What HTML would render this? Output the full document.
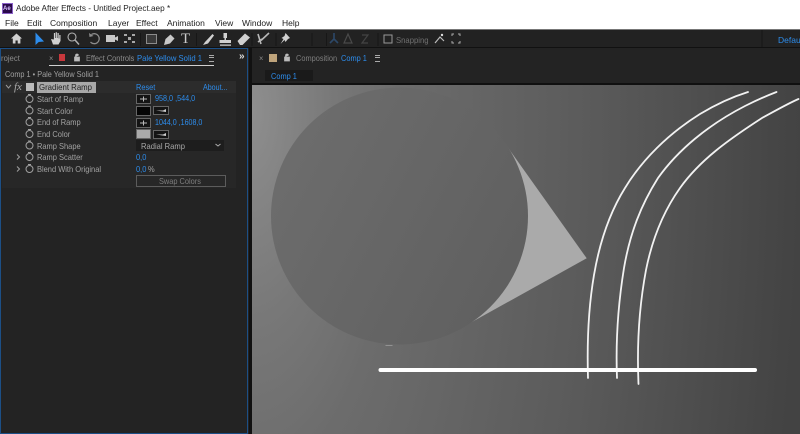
<!DOCTYPE html>
<html><head><meta charset="utf-8">
<style>
html,body{margin:0;padding:0;width:800px;height:434px;overflow:hidden;background:#232323}
body{position:relative;font-family:"Liberation Sans",sans-serif}
.t{position:absolute;white-space:nowrap;line-height:12px;font-size:8.5px;color:#a2a2a2;transform-origin:0 50%;transform:scaleX(.88)}
.m{color:#222;transform:none}
.b{color:#2d8ceb}
.d{position:absolute}
</style></head><body>
<div class="d" style="left:0;top:0;width:800px;height:29px;background:#fff"></div>
<div class="d" style="left:2px;top:3px;width:9px;height:9px;background:#2a0a4a;border:1px solid #8a60c8"></div>
<div class="t" style="left:3px;top:3px;font-size:6px;color:#d8c0ff;font-weight:bold;transform:none">Ae</div>
<div class="t m" style="left:16px;top:3px;font-size:8.2px">Adobe After Effects - Untitled Project.aep *</div>
<div class="t m" style="left:5px;top:17px">File</div>
<div class="t m" style="left:27px;top:17px">Edit</div>
<div class="t m" style="left:50px;top:17px">Composition</div>
<div class="t m" style="left:108px;top:17px">Layer</div>
<div class="t m" style="left:136px;top:17px">Effect</div>
<div class="t m" style="left:167px;top:17px">Animation</div>
<div class="t m" style="left:215px;top:17px">View</div>
<div class="t m" style="left:242px;top:17px">Window</div>
<div class="t m" style="left:282px;top:17px">Help</div>
<div class="d" style="left:0;top:29px;width:800px;height:1px;background:#777"></div>
<div class="d" style="left:0;top:30px;width:800px;height:17px;background:#222"></div>
<div class="d" style="left:0;top:47px;width:800px;height:1px;background:#111"></div>

<svg class="d" style="left:0;top:28px" width="800" height="22" viewBox="0 28 800 22">
<path d="M16.500 33.500l-5.500 5h1.800v5h2.700v-3h2.200v3h2.700v-5h1.600z" fill="#d0d0d0"/>
<path d="M35.500 32.500v12.500l3.200-3 5.300-.5z" fill="#2d8ceb"/>
<path d="M51 39l2 5.500h5.500l2-3.500v-6h-1.200v3.500h-.6v-5.500h-1.200v5h-.6v-5.800h-1.200v5.800h-.6v-5h-1.200v6.500z" fill="#d0d0d0"/>
<circle cx="72" cy="37" r="4" fill="none" stroke="#b0b0b0" stroke-width="1.100"/><path d="M75 40l4 4.500" stroke="#b0b0b0" stroke-width="1.500"/>
<path d="M91.500 34.500a5 5 0 1 1 -1 7.500" fill="none" stroke="#8c8c8c" stroke-width="1.300"/><path d="M89 33l.5 4 4-1z" fill="#8c8c8c"/>
<path d="M106 35h9v7h-9zM115 37.500l3-1.500v5l-3-1.500z" fill="#c8c8c8"/>
<g fill="#a8a8a8"><rect x="124" y="34" width="3" height="2"/><rect x="132" y="34" width="3" height="2"/><rect x="124" y="41" width="3" height="2"/><rect x="132" y="41" width="3" height="2"/><rect x="128" y="37" width="3" height="3"/></g>
<rect x="146.500" y="34.500" width="10" height="9" fill="#3a3a3a" stroke="#8c8c8c" stroke-width="1"/>
<path d="M164 45l1.500-6 5-4.500 4 4-4.500 5z" fill="#c8c8c8"/>
<path d="M203 45l2-3 7.500-8 1.500 1.500-6 8z" fill="#d0d0d0"/>
<path d="M223.500 33h3.500v5h-1v2h5v3h-11.500v-3h5v-2h-1zM220 44.500h11v1.200h-11z" fill="#d0d0d0"/>
<path d="M237.500 41l7.500-7.500 5 4-7.500 7.500h-2.500z" fill="#d0d0d0"/>
<path d="M258 34l3 10M261 40.500l8-7.500M258 42l4-3" stroke="#b8b8b8" stroke-width="1.600" fill="none"/>
<path d="M285.500 33l4.500 5-2 1-2.500 3-1-2-4 4 3-5-2-1 3-2z" fill="#d0d0d0"/>
<g fill="none" stroke-width="1.200"><path d="M334 33v6l-4 4M334 39l4 4" stroke="#2c4868" stroke-width="1.600"/><path d="M348 34l-4 9h8z" stroke="#4a4a4a"/><path d="M362 35h6l-6 8h6" stroke="#444"/></g>
<rect x="384" y="35" width="8" height="8" fill="none" stroke="#999" stroke-width="1"/>
<path d="M435 43l5-6 4 4" fill="none" stroke="#bbb" stroke-width="1.200"/><circle cx="442" cy="35" r="1.200" fill="#ddd"/>
<g fill="none" stroke="#aaa" stroke-width="1"><path d="M452 36v-2h2M458 34h2v2M460 41v2h-2M454 43h-2v-2"/></g>
<path d="M140.500 33v13M196.500 33v13M252 33v13M276 33v13M312 33v13M326.500 33v13M378 33v13M762 30v17" stroke="#171717" stroke-width="1"/>
</svg>
<div class="t" style="left:181px;top:32px;font-family:'Liberation Serif',serif;font-size:15px;color:#ccc;line-height:15px;transform:none">T</div>
<div class="t" style="left:396px;top:34px;color:#707070;transform:scaleX(.906)">Snapping</div>
<div class="t b" style="left:778px;top:34px;transform:none">Default</div>

<!-- left panel -->
<div class="d" style="left:0;top:48px;width:248px;height:386px;background:#232323;box-sizing:border-box;border:1px solid #1c4f86"></div>
<div class="d" style="left:249px;top:48px;width:3px;height:386px;background:#111"></div>
<div class="d" style="left:252px;top:48px;width:548px;height:37px;background:#232323"></div>
<div class="t" style="left:1px;top:52px;color:#8c8c8c;transform:scaleX(.906)">roject</div>
<div class="t" style="left:49px;top:52px;color:#8a8a8a">×</div>
<div class="d" style="left:59px;top:54px;width:6px;height:7px;background:#c8383c"></div>
<svg class="d" style="left:73px;top:53px" width="8" height="9"><path d="M1.500 4h5v4h-5zM2.500 4v-1.500a1.500 1.500 0 0 1 3 0" fill="#bbb" stroke="#bbb" stroke-width=".7"/></svg>
<div class="t" style="left:85.500px;top:52px;color:#8c8c8c;transform:scaleX(.87)">Effect Controls</div>
<div class="t b" style="left:137px;top:52px;transform:scaleX(.906)">Pale Yellow Solid 1</div>
<div class="d" style="left:209px;top:55px;width:5px;height:5px;border-top:1px solid #aaa;border-bottom:1px solid #aaa"></div><div class="d" style="left:209px;top:57px;width:5px;height:1px;background:#aaa"></div>
<div class="d" style="left:49px;top:65px;width:165px;height:1px;background:#d0d0d0"></div>
<div class="t" style="left:239px;top:51px;color:#ddd;font-weight:bold;font-size:10px;transform:none">»</div>
<div class="t" style="left:5px;top:68px;color:#a0a0a0;transform:scaleX(.86)">Comp 1 • Pale Yellow Solid 1</div>

<div class="d" style="left:2px;top:81px;width:234px;height:12px;background:#2c2c2c"></div>
<div class="d" style="left:2px;top:93px;width:234px;height:95px;background:#272727"></div>
<svg class="d" style="left:0;top:80px" width="40" height="14"><path d="M6 5l2.500 3 2.500-3" fill="none" stroke="#999" stroke-width="1"/></svg>
<div class="t" style="left:14px;top:81px;font-family:'Liberation Serif',serif;font-style:italic;font-size:11px;color:#aaa;transform:none">fx</div>
<div class="d" style="left:26px;top:83px;width:8px;height:8px;background:#bbb"></div>
<div class="d" style="left:37px;top:81.500px;width:59px;height:11px;background:#a8a8a8"></div>
<div class="t" style="left:39px;top:81px;color:#222;transform:scaleX(.92)">Gradient Ramp</div>
<div class="t b" style="left:136px;top:81px;transform:scaleX(.87)">Reset</div>
<div class="t b" style="left:203px;top:81px;transform:scaleX(.835)">About...</div>

<svg class="d" style="left:0;top:90px" width="240" height="110" fill="none">
<g stroke="#a0a0a0" stroke-width="1"><circle cx="29.500" cy="9" r="3.500"/><circle cx="29.500" cy="20.500" r="3.500"/><circle cx="29.500" cy="32" r="3.500"/><circle cx="29.500" cy="44" r="3.500"/><circle cx="29.500" cy="55.500" r="3.500"/><circle cx="29.500" cy="67" r="3.500"/><circle cx="29.500" cy="79" r="3.500"/>
<path d="M28 4.500h3M28 16h3M28 27.500h3M28 39.500h3M28 51h3M28 62.500h3M28 74.500h3"/>
<path d="M17 64.500l2.500 2.500-2.500 2.500M17 76.500l2.500 2.500-2.500 2.500"/></g>
<g fill="#141414" stroke="#666"><rect x="136.500" y="4.500" width="14" height="9"/><rect x="136.500" y="16.500" width="14" height="9" fill="#050505"/><rect x="136.500" y="28.500" width="14" height="9"/><rect x="136.500" y="39.500" width="14" height="9" fill="#aaa"/><rect x="153.500" y="16.500" width="15" height="8"/><rect x="153.500" y="40.500" width="15" height="8"/></g>
<path d="M140 9h7M143.500 6.500v5M140 33h7M143.500 30.500v5" stroke="#bbb"/>
<path d="M156 20.500h7l3-1.500v3zM156 44.500h7l3-1.500v3z" fill="#ccc"/>
</svg>
<div class="t" style="left:37px;top:93px">Start of Ramp</div>
<div class="t b" style="left:155px;top:92px;transform:scaleX(.85)">958,0 ,544,0</div>
<div class="t" style="left:37px;top:105px">Start Color</div>
<div class="t" style="left:37px;top:116px">End of Ramp</div>
<div class="t b" style="left:155px;top:116px;transform:scaleX(.835)">1044,0 ,1608,0</div>
<div class="t" style="left:37px;top:128px">End Color</div>
<div class="d" style="left:136px;top:140px;width:88px;height:11px;background:#1d1d1d"></div>
<svg class="d" style="left:214px;top:142px" width="8" height="7"><path d="M1.500 2l2.500 2 2.500-2" fill="none" stroke="#aaa"/></svg>
<div class="t" style="left:37px;top:140px">Ramp Shape</div>
<div class="t" style="left:141px;top:140px;color:#a8a8a8;transform:scaleX(.894)">Radial Ramp</div>
<div class="t" style="left:37px;top:151px">Ramp Scatter</div>
<div class="t b" style="left:136px;top:151px">0,0</div>
<div class="t" style="left:37px;top:163px">Blend With Original</div>
<div class="t b" style="left:136px;top:163px">0,0</div>
<div class="t" style="left:148px;top:163px">%</div>
<div class="d" style="left:136px;top:175px;width:88px;height:9.500px;border:1px solid #5c5c5c;background:#272727"></div>
<div class="t" style="left:159px;top:174.500px;color:#7e7e7e;transform:scaleX(.87)">Swap Colors</div>

<!-- comp panel tabs -->
<div class="t" style="left:259px;top:52px;color:#8a8a8a">×</div>
<div class="d" style="left:269px;top:53.500px;width:8px;height:8px;background:#bfa47c"></div>
<svg class="d" style="left:283px;top:53px" width="8" height="9"><path d="M1.500 4h5v4h-5zM2.500 4v-1.500a1.500 1.500 0 0 1 3 0" fill="#bbb" stroke="#bbb" stroke-width=".7"/></svg>
<div class="t" style="left:296px;top:52px;color:#7e7e7e;transform:scaleX(.87)">Composition</div>
<div class="t b" style="left:341px;top:52px;transform:scaleX(.87)">Comp 1</div>
<div class="d" style="left:375px;top:55px;width:5px;height:5px;border-top:1px solid #aaa;border-bottom:1px solid #aaa"></div><div class="d" style="left:375px;top:57px;width:5px;height:1px;background:#aaa"></div>
<div class="d" style="left:265px;top:70px;width:48px;height:11px;background:#1a1a1a"></div>
<div class="t b" style="left:271px;top:70px;transform:scaleX(.87)">Comp 1</div>
<div class="d" style="left:252px;top:83px;width:548px;height:2px;background:#101010"></div>

<!-- viewer -->
<svg class="d" style="left:252px;top:85px" width="548" height="349" viewBox="252 85 548 349">
<defs>
<radialGradient id="g" gradientUnits="userSpaceOnUse" cx="0" cy="0" r="1" gradientTransform="translate(252 110) scale(548 1400)"><stop offset="0" stop-color="#8e8e8e"/><stop offset=".15" stop-color="#787878"/><stop offset=".27" stop-color="#6c6c6c"/><stop offset=".63" stop-color="#5a5a5a"/><stop offset="1" stop-color="#434343"/></radialGradient>
<linearGradient id="c" gradientUnits="userSpaceOnUse" x1="271" y1="150" x2="528" y2="280"><stop offset="0" stop-color="#6d6d6d"/><stop offset="1" stop-color="#5f5f5f"/></linearGradient>
</defs>
<rect x="252" y="85" width="548" height="349" fill="url(#g)"/>
<path d="M502.100 139.300L586.700 258.300 462 327.500z" fill="#aaaaaa"/>
<circle cx="399.500" cy="216" r="128.500" fill="url(#c)"/>
<path d="M385 345h8l-1 .8h-6z" fill="#a0a0a0"/>
<g fill="none" stroke="#f2f2f2" stroke-width="1.800" stroke-linecap="round">
<path d="M588 378C587 345 588 310 594 275C600 240 610 212 625 188C642 160 668 134 700 114C715 105 732 97 748 92"/>
<path d="M617 378C615.500 340 618 305 624 268C630 233 641 205 658 178C678 150 708 125 745 106C755 101 766 96 776.500 92"/>
<path d="M638.500 384C637 350 638.500 310 646 270C652 240 663 212 680 188C700 160 728 140 762 118C775 111 787 104 798.500 99"/>
</g>
<path d="M380.500 370H755" stroke="#fff" stroke-width="4" stroke-linecap="round"/>
</svg>
</body></html>
